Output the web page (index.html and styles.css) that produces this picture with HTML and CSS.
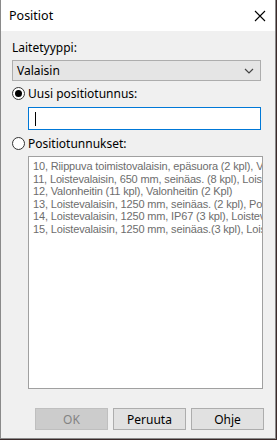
FILE: index.html
```html
<!DOCTYPE html>
<html lang="fi">
<head>
    <meta charset="UTF-8">
    <title>Positiot</title>
    <link rel="stylesheet" href="styles.css">
</head>
<body>
    <div class="window">
        <div class="titlebar">
            <span class="title">Positiot</span>
            <svg class="close" width="12" height="12" viewBox="0 0 12 12">
                <path d="M1 1 L11 11 M11 1 L1 11" stroke="#000" stroke-width="1.1" fill="none"/>
            </svg>
        </div>

        <div class="content">
            <div class="field-label">Laitetyyppi:</div>
            <div class="select">
                <span>Valaisin</span>
                <svg width="10" height="6" viewBox="0 0 10 6">
                    <path d="M1 1 L5 5 L9 1" stroke="#444" stroke-width="1.2" fill="none"/>
                </svg>
            </div>

            <label class="radio">
                <span class="dot checked"></span>
                <span>Uusi positiotunnus:</span>
            </label>
            <div class="text-input"><span class="caret"></span></div>

            <label class="radio second">
                <span class="dot"></span>
                <span>Positiotunnukset:</span>
            </label>
            <div class="listbox">
                <div>10, Riippuva toimistovalaisin, epäsuora (2 kpl), Valaisin</div>
                <div>11, Loistevalaisin, 650 mm, seinäas. (8 kpl), Loistevalaisin</div>
                <div>12, Valonheitin (11 kpl), Valonheitin (2 Kpl)</div>
                <div>13, Loistevalaisin, 1250 mm, seinäas. (2 kpl), Pollari</div>
                <div>14, Loistevalaisin, 1250 mm, IP67 (3 kpl), Loistevalaisin</div>
                <div>15, Loistevalaisin, 1250 mm, seinäas.(3 kpl), Loistevalaisin</div>
            </div>

            <div class="buttons">
                <button class="btn" disabled>OK</button>
                <button class="btn">Peruuta</button>
                <button class="btn">Ohje</button>
            </div>
        </div>
    </div>
</body>
</html>
```

FILE: styles.css
```css
body {
    margin: 0;
    background: #3a2a2a;
    font-family: "Noto Sans", "Liberation Sans", sans-serif;
    font-size: 12px;
    color: #000;
}

.window {
    width: 274px; height: 438px;
    border: 1px solid #8a8a8a; border-top: none;
    background: #f0f0f0;
    display: flex; flex-direction: column;
}

.titlebar {
    height: 31px; background: #fff;
    display: flex; align-items: center; justify-content: space-between;
    padding: 0 9px 0 8px;
}
.title { font-size: 12.5px; }

.content {
    padding: 9px 11px 0 11px;
    display: flex; flex-direction: column;
}

.field-label { line-height: 16px; }

.select {
    margin: 4px 3px 0 0;
    height: 19px;
    border: 1px solid #adadad; background: #e5e5e5;
    display: flex; align-items: center; justify-content: space-between;
    padding: 0 6px 0 4px;
}

.radio {
    display: flex; align-items: center; gap: 3px;
    margin-top: 5px; height: 14px;
}
.radio.second { margin-top: 6px; }
.dot {
    width: 11px; height: 11px; border-radius: 50%;
    border: 1px solid #333; background: #fff;
    display: flex; align-items: center; justify-content: center;
}
.dot.checked::after {
    content: ''; width: 7px; height: 7px; border-radius: 50%; background: #000;
}

.text-input {
    margin: 7px 3px 0 16px;
    height: 21px; border: 1px solid #0078d7; background: #fff;
    display: flex; align-items: center; padding-left: 6px;
}
.caret { width: 1px; height: 14px; background: #000; }

.listbox {
    margin: 6px 1px 0 16px;
    height: 226px; border: 1px solid #a0a0a0; background: #fff;
    padding: 3px 0 2px 4px; overflow: hidden;
    font-family: "Liberation Sans", sans-serif; font-size: 11px;
    letter-spacing: -0.15px;
    line-height: 12.5px; color: #6d6d6d; white-space: nowrap;
}

.buttons {
    display: flex; justify-content: flex-end; gap: 5px;
    margin-top: 19px;
}
.btn {
    width: 73px; height: 22px;
    border: 1px solid #adadad; background: #e1e1e1;
    font-family: "Noto Sans", "Liberation Sans", sans-serif; font-size: 12px;
    color: #000; padding: 0;
}
.btn:disabled { background: #cccccc; border-color: #bfbfbf; color: #838383; }
```
